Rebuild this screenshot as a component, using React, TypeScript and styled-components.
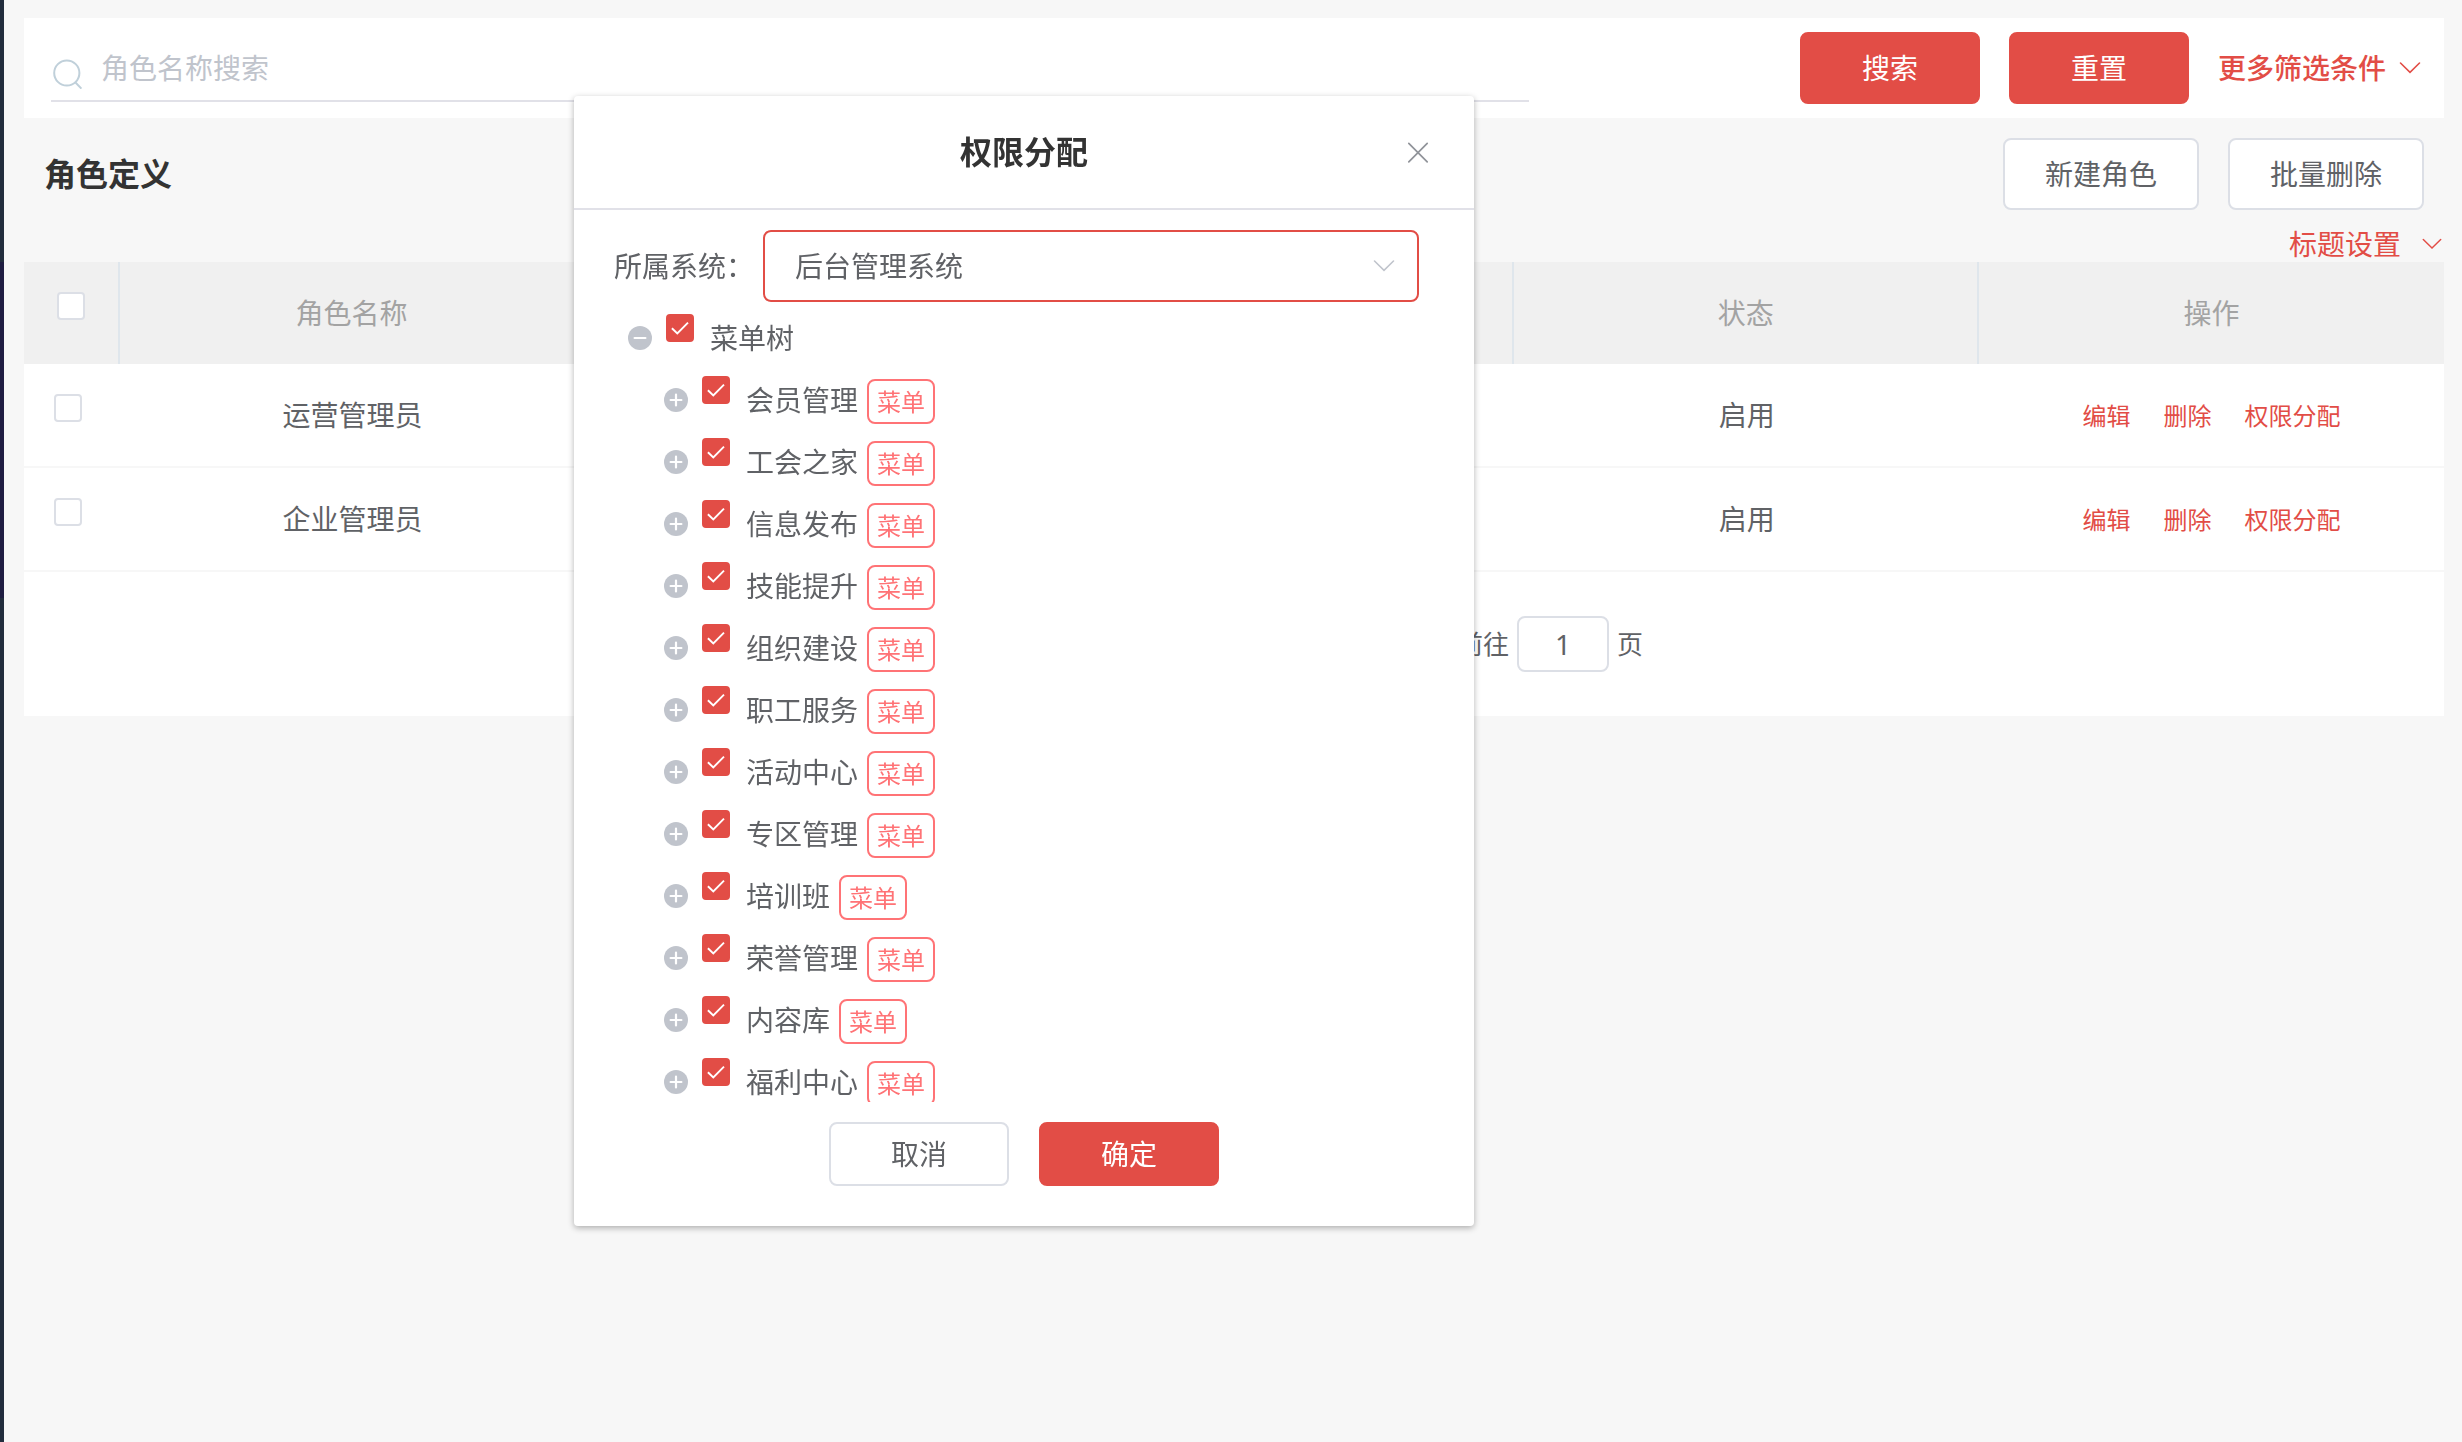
import React from "react";
import styled, { createGlobalStyle } from "styled-components";

const color = {
  brand: "#e24d46",
  tag: "#ff7376",
  text: "#606266",
  heading: "#333333",
  muted: "#a3a3a3",
  placeholder: "#c0c4cc",
  border: "#dcdfe6",
  line: "#e1e1e8",
  page: "#f7f7f7",
};

const GlobalStyle = createGlobalStyle`
  *, *::before, *::after { box-sizing: border-box; }
  body {
    margin: 0;
    background: ${color.page};
    color: ${color.text};
    font-family: "Noto Sans", "Noto Sans CJK SC", sans-serif;
    font-size: 28px;
    line-height: 36px;
  }
  button, input, select { font: inherit; color: inherit; }
`;

const Shell = styled.div`
  display: flex;
  min-height: 100vh;
`;

const SideEdge = styled.aside`
  flex: 0 0 4px;
  padding-top: 262px;
  background: #222d3d;
`;

const SideOpenGroup = styled.div`
  height: 336px;
  background: #1f1d42;
`;

const Main = styled.main`
  flex: 1;
  min-width: 0;
  padding: 18px 18px 0 20px;
`;

const SearchPanel = styled.form`
  display: grid;
  grid-template-columns: 1fr auto;
  column-gap: 271px;
  align-items: center;
  padding: 14px 22px 14px 27px;
  background: #fff;
`;

const SearchField = styled.label`
  display: flex;
  align-items: center;
  gap: 18px;
  height: 68px;
  padding: 2px 0 0 2px;
  border-bottom: 2px solid ${color.line};

  svg {
    flex: none;
    margin-top: 12px;
  }
`;

const SearchInput = styled.input`
  flex: 1;
  min-width: 0;
  padding: 0;
  border: 0;
  outline: 0;
  background: transparent;

  &::placeholder {
    color: ${color.placeholder};
    opacity: 1;
  }
`;

const SearchActions = styled.div`
  display: flex;
  align-items: center;
  gap: 29px;
`;

const Button = styled.button<{ $primary?: boolean; $width?: number; $height?: number }>`
  width: ${(p) => p.$width ?? 180}px;
  height: ${(p) => p.$height ?? 72}px;
  padding: 0;
  border: 2px solid ${(p) => (p.$primary ? color.brand : color.border)};
  border-radius: 8px;
  background: ${(p) => (p.$primary ? color.brand : "#fff")};
  color: ${(p) => (p.$primary ? "#fff" : color.text)};
  cursor: pointer;
`;

const TextButton = styled.button<{ $gap: number; $weight?: number }>`
  display: flex;
  align-items: center;
  gap: ${(p) => p.$gap}px;
  padding: 0;
  border: 0;
  background: none;
  color: ${color.brand};
  font-weight: ${(p) => p.$weight ?? 400};
  cursor: pointer;
`;

const TitleBar = styled.header`
  display: flex;
  align-items: center;
  justify-content: space-between;
  padding: 20px 20px 0;
`;

const PageTitle = styled.h1`
  margin: 0;
  color: ${color.heading};
  font-size: 32px;
  font-weight: 700;
`;

const ButtonGroup = styled.div`
  display: flex;
  gap: 29px;
`;

const ColumnSettings = styled.div`
  display: flex;
  justify-content: flex-end;
  padding: 16px 1px 0 0;
`;

const TablePanel = styled.section`
  background: #fff;
`;

const Table = styled.table`
  width: 100%;
  table-layout: fixed;
  border-collapse: separate;
  border-spacing: 0;
  text-align: center;
`;

const CheckCol = styled.col`
  width: 96px;
`;

const Th = styled.th`
  height: 102px;
  padding: 0;
  background: #f0f0f0;
  color: ${color.muted};
  font-weight: 400;

  &:not(:last-child) {
    border-right: 2px solid #dfe6ec;
  }
`;

const Td = styled.td`
  height: 104px;
  padding: 0;
  border-bottom: 2px solid ${color.page};
`;

const CheckTh = styled(Th)`
  padding: 30px 33px 0;
  vertical-align: top;
`;

const CheckTd = styled(Td)`
  padding: 30px 30px 0;
  vertical-align: top;
`;

const RowActions = styled.div`
  display: flex;
  justify-content: center;
  gap: 33px;
  padding-top: 2px;
  font-size: 24px;
`;

const RowLink = styled.a`
  color: ${color.brand};
  text-decoration: none;
`;

const CheckWrap = styled.span`
  display: grid;
  width: 28px;
  height: 28px;

  > * {
    grid-area: 1 / 1;
  }

  svg {
    pointer-events: none;
  }
`;

const CheckInput = styled.input`
  appearance: none;
  width: 28px;
  height: 28px;
  margin: 0;
  border: 2px solid ${color.border};
  border-radius: 4px;
  background: #fff;

  &:checked {
    border-color: ${color.brand};
    background: ${color.brand};
  }
`;

const Pagination = styled.div`
  display: flex;
  align-items: center;
  justify-content: flex-end;
  gap: 8px;
  max-width: 818px;
  margin: 0 auto;
  padding: 44px 0;
  font-size: 26px;
`;

const PageInput = styled.input`
  width: 92px;
  height: 56px;
  padding: 0;
  border: 2px solid ${color.border};
  border-radius: 8px;
  background: #fff;
  font-size: 28px;
  text-align: center;
`;

const DialogLayer = styled.div`
  position: fixed;
  inset: 0;
  display: flex;
  align-items: flex-start;
  justify-content: center;
  padding: 96px 414px 0 0;
`;

const Dialog = styled.section`
  width: 900px;
  border-radius: 4px;
  background: #fff;
  box-shadow: 0 2px 6px rgba(0, 0, 0, 0.3);
`;

const DialogHeader = styled.header`
  display: grid;
  grid-template-columns: 1fr auto 1fr;
  align-items: center;
  height: 114px;
  padding: 0 44px;
  border-bottom: 2px solid ${color.line};
`;

const DialogTitle = styled.h2`
  grid-column: 2;
  margin: 0;
  color: ${color.heading};
  font-size: 32px;
  font-weight: 700;
`;

const CloseButton = styled.button`
  display: flex;
  justify-self: end;
  padding: 0;
  border: 0;
  background: none;
  cursor: pointer;
`;

const FormRow = styled.div`
  display: flex;
  align-items: center;
  gap: 9px;
  padding: 20px 55px 4px 40px;
`;

const SelectBox = styled.div`
  flex: 1;
  display: grid;
  align-items: center;

  > * {
    grid-area: 1 / 1;
  }

  svg {
    justify-self: end;
    margin-right: 23px;
    pointer-events: none;
  }
`;

const Select = styled.select`
  appearance: none;
  width: 100%;
  height: 72px;
  padding: 0 60px 0 30px;
  border: 2px solid ${color.brand};
  border-radius: 8px;
  outline: 0;
  background: #fff;
`;

const TreeScroll = styled.div`
  height: 796px;
  padding-left: 54px;
  overflow-y: auto;
  scrollbar-width: none;
`;

const TreeList = styled.ul<{ $nested?: boolean }>`
  margin: 0;
  padding: 0 0 0 ${(p) => (p.$nested ? 36 : 0)}px;
  list-style: none;
`;

const TreeRow = styled.div`
  display: flex;
  align-items: center;
  height: 62px;
  padding-top: 2px;

  ${CheckWrap} {
    align-self: flex-start;
    margin: 6px 16px 0 14px;
  }
`;

const ToggleButton = styled.button`
  display: flex;
  padding: 0;
  border: 0;
  background: none;
  cursor: pointer;
`;

const Tag = styled.span`
  margin: 3px 0 0 9px;
  padding: 0 8px;
  border: 2px solid ${color.tag};
  border-radius: 8px;
  color: ${color.tag};
  font-size: 24px;
  line-height: 41px;
`;

const DialogFooter = styled.footer`
  display: flex;
  justify-content: center;
  gap: 30px;
  padding: 20px 0 40px;
`;

const SearchIcon = () => (
  <svg width="30" height="30" viewBox="0 0 30 30" fill="none" stroke="#c0d0da" strokeWidth="2" aria-hidden="true">
    <circle cx="13.8" cy="14" r="12.6" />
    <path d="M22.5 23.5 28.4 29.6" />
  </svg>
);

const Chevron = ({ size, stroke = "currentColor" }: { size: number; stroke?: string }) => (
  <svg width={size} height={size} viewBox="0 0 24 24" fill="none" stroke={stroke} strokeWidth="1.6" strokeLinecap="round" aria-hidden="true">
    <path d="M2.5 7 12 16.3 21.5 7" />
  </svg>
);

const CloseIcon = () => (
  <svg width="24" height="24" viewBox="0 0 24 24" fill="none" stroke="#909399" strokeWidth="1.7" strokeLinecap="round" aria-hidden="true">
    <path d="M2.8 3.4 21.2 21.8M21.2 3.4 2.8 21.8" />
  </svg>
);

const ToggleIcon = ({ open }: { open?: boolean }) => (
  <svg width="24" height="24" viewBox="0 0 24 24" aria-hidden="true">
    <circle cx="12" cy="12" r="12" fill="#c0c4cc" />
    <path d={open ? "M6.6 12H17.4" : "M6.6 12H17.4M12 6.6V17.4"} stroke="#fff" strokeWidth="2.2" strokeLinecap="round" />
  </svg>
);

const Checkbox = ({ label, checked }: { label: string; checked?: boolean }) => {
  const [on, setOn] = React.useState(Boolean(checked));
  return (
    <CheckWrap>
      <CheckInput type="checkbox" aria-label={label} checked={on} onChange={(e) => setOn(e.target.checked)} />
      {on && (
        <svg width="28" height="28" viewBox="0 0 28 28" fill="none" stroke="#fff" strokeWidth="1.9" aria-hidden="true">
          <path d="M5.9 14.2 11.3 19.4 22 8.6" />
        </svg>
      )}
    </CheckWrap>
  );
};

const roles = ["运营管理员", "企业管理员"];

const menus = [
  "会员管理",
  "工会之家",
  "信息发布",
  "技能提升",
  "组织建设",
  "职工服务",
  "活动中心",
  "专区管理",
  "培训班",
  "荣誉管理",
  "内容库",
  "福利中心",
];

const PermissionDialog = () => (
  <DialogLayer>
    <Dialog role="dialog" aria-labelledby="dialog-title">
      <DialogHeader>
        <DialogTitle id="dialog-title">权限分配</DialogTitle>
        <CloseButton type="button" aria-label="关闭">
          <CloseIcon />
        </CloseButton>
      </DialogHeader>
      <FormRow>
        <label htmlFor="system">所属系统：</label>
        <SelectBox>
          <Select id="system" defaultValue="admin">
            <option value="admin">后台管理系统</option>
          </Select>
          <Chevron size={24} stroke={color.placeholder} />
        </SelectBox>
      </FormRow>
      <TreeScroll>
        <TreeList>
          <li>
            <TreeRow>
              <ToggleButton type="button" aria-label="收起">
                <ToggleIcon open />
              </ToggleButton>
              <Checkbox label="菜单树" checked />
              <span>菜单树</span>
            </TreeRow>
            <TreeList $nested>
              {menus.map((menu) => (
                <li key={menu}>
                  <TreeRow>
                    <ToggleButton type="button" aria-label="展开">
                      <ToggleIcon />
                    </ToggleButton>
                    <Checkbox label={menu} checked />
                    <span>{menu}</span>
                    <Tag>菜单</Tag>
                  </TreeRow>
                </li>
              ))}
            </TreeList>
          </li>
        </TreeList>
      </TreeScroll>
      <DialogFooter>
        <Button type="button" $height={64}>取消</Button>
        <Button type="button" $height={64} $primary>确定</Button>
      </DialogFooter>
    </Dialog>
  </DialogLayer>
);

export default function App() {
  return (
    <>
      <GlobalStyle />
      <Shell>
        <SideEdge>
          <SideOpenGroup />
        </SideEdge>
        <Main>
          <SearchPanel onSubmit={(e) => e.preventDefault()}>
            <SearchField>
              <SearchIcon />
              <SearchInput type="text" placeholder="角色名称搜索" aria-label="角色名称搜索" />
            </SearchField>
            <SearchActions>
              <Button type="submit" $primary>搜索</Button>
              <Button type="reset" $primary>重置</Button>
              <TextButton type="button" $gap={12} $weight={500}>
                更多筛选条件
                <Chevron size={24} />
              </TextButton>
            </SearchActions>
          </SearchPanel>

          <TitleBar>
            <PageTitle>角色定义</PageTitle>
            <ButtonGroup>
              <Button type="button" $width={196}>新建角色</Button>
              <Button type="button" $width={196}>批量删除</Button>
            </ButtonGroup>
          </TitleBar>
          <ColumnSettings>
            <TextButton type="button" $gap={20}>
              标题设置
              <Chevron size={22} />
            </TextButton>
          </ColumnSettings>

          <TablePanel>
            <Table>
              <colgroup>
                <CheckCol />
                <col span={5} />
              </colgroup>
              <thead>
                <tr>
                  <CheckTh scope="col">
                    <Checkbox label="全选" />
                  </CheckTh>
                  <Th scope="col">角色名称</Th>
                  <Th />
                  <Th />
                  <Th scope="col">状态</Th>
                  <Th scope="col">操作</Th>
                </tr>
              </thead>
              <tbody>
                {roles.map((role) => (
                  <tr key={role}>
                    <CheckTd>
                      <Checkbox label={role} />
                    </CheckTd>
                    <Td>{role}</Td>
                    <Td />
                    <Td />
                    <Td>启用</Td>
                    <Td>
                      <RowActions>
                        <RowLink href="#edit">编辑</RowLink>
                        <RowLink href="#delete">删除</RowLink>
                        <RowLink href="#permission">权限分配</RowLink>
                      </RowActions>
                    </Td>
                  </tr>
                ))}
              </tbody>
            </Table>
            <Pagination>
              <label htmlFor="page">前往</label>
              <PageInput id="page" type="text" inputMode="numeric" defaultValue="1" />
              <span>页</span>
            </Pagination>
          </TablePanel>
        </Main>
      </Shell>
      <PermissionDialog />
    </>
  );
}
